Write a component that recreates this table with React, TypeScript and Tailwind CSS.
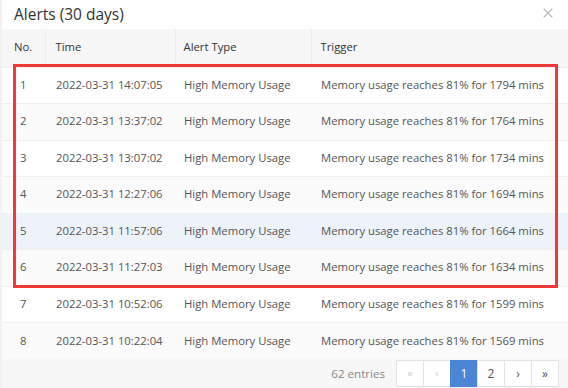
import { X } from "lucide-react";

const ROWS = [
  { no: 1, time: "2022-03-31 14:07:05", mins: 1794 },
  { no: 2, time: "2022-03-31 13:37:02", mins: 1764 },
  { no: 3, time: "2022-03-31 13:07:02", mins: 1734 },
  { no: 4, time: "2022-03-31 12:27:06", mins: 1694 },
  { no: 5, time: "2022-03-31 11:57:06", mins: 1664 },
  { no: 6, time: "2022-03-31 11:27:03", mins: 1634 },
  { no: 7, time: "2022-03-31 10:52:06", mins: 1599 },
  { no: 8, time: "2022-03-31 10:22:04", mins: 1569 },
];

const PAGES = [
  { label: "«", muted: true },
  { label: "‹", muted: true },
  { label: "1", active: true },
  { label: "2" },
  { label: "›" },
  { label: "»" },
];

export default function App() {
  return (
    <div
      className="h-[388px] w-[568px] overflow-hidden bg-[#f2f2f2] pl-[2px]"
      style={{ fontFamily: '"Open Sans", "Noto Sans", sans-serif' }}
    >
      <div className="relative flex h-full flex-col bg-white">
        {/* header */}
        <div className="flex h-[29px] items-center justify-between pl-[12px] pr-[12px]">
          <h2 className="text-[15.5px] text-[#333]">Alerts (30 days)</h2>
          <X className="-mt-[4px] h-[16px] w-[16px] text-[#b8b8b8]" strokeWidth={1.6} />
        </div>

        {/* table */}
        <table className="w-full table-fixed border-collapse text-[11.3px]">
          <colgroup>
            <col className="w-[43px]" />
            <col className="w-[130px]" />
            <col className="w-[136px]" />
            <col />
          </colgroup>
          <thead>
            <tr className="h-[38px] bg-[#f7f7f7] text-left text-[#333]">
              <th className="pl-[12px] font-normal">No.</th>
              <th className="border-l border-[#ececec] pl-[10px] font-normal">Time</th>
              <th className="border-l border-[#ececec] pl-[8px] font-normal">Alert Type</th>
              <th className="border-l border-[#ececec] pl-[9px] font-normal">Trigger</th>
            </tr>
          </thead>
          <tbody className="text-[#555]">
            {ROWS.map((r) => (
              <tr
                key={r.no}
                className={
                  r.no === 5
                    ? "h-[36.5px] border-t border-[#eef0f3] bg-[#eef3fa]"
                    : r.no % 2 === 0
                      ? "h-[36.5px] border-t border-[#f0f0f0] bg-[#fbfbfb]"
                      : "h-[36.5px] border-t border-[#f0f0f0] bg-white"
                }
              >
                <td className="pl-[18px]">{r.no}</td>
                <td className="pl-[11px]">{r.time}</td>
                <td className="pl-[9px]">High Memory Usage</td>
                <td className="pl-[10px]">Memory usage reaches 81% for {r.mins} mins</td>
              </tr>
            ))}
          </tbody>
        </table>

        {/* footer */}
        <div className="flex flex-1 items-center justify-end gap-[12px] bg-[#f7f7f7] pr-[9px]">
          <span className="text-[11.6px] text-[#888]">62 entries</span>
          <div className="flex">
            {PAGES.map((p, i) => (
              <span
                key={i}
                className={
                  p.active
                    ? "-ml-px flex h-[27px] w-[28px] items-center justify-center border border-[#4a86d4] bg-[#4a86d4] text-[12px] text-white"
                    : p.muted
                      ? "-ml-px flex h-[27px] w-[28px] items-center justify-center border border-[#e3e3e3] bg-white text-[11px] text-[#ccc]"
                      : "-ml-px flex h-[27px] w-[28px] items-center justify-center border border-[#e3e3e3] bg-white text-[12px] text-[#555]"
                }
              >
                {p.label}
              </span>
            ))}
          </div>
        </div>

        {/* highlight annotation */}
        <div className="pointer-events-none absolute left-[11px] top-[64px] h-[224px] w-[545px] border-[3px] border-[#f03a3a]" />
      </div>
    </div>
  );
}
